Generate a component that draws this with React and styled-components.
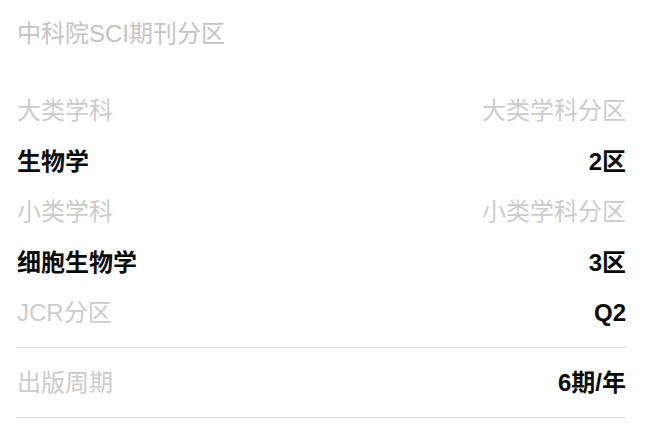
import React from "react";
import styled, { createGlobalStyle } from "styled-components";

const Global = createGlobalStyle`
  html, body { margin: 0; padding: 0; background: #ffffff; }
  body { font-family: "Liberation Sans", "Noto Sans CJK SC", sans-serif; }
`;

const Panel = styled.div`
  width: 649px;
  box-sizing: border-box;
  padding: 0 23px 0 16px;
  background: #fff;
`;

const Title = styled.h2`
  margin: 0;
  padding-left: 1px;
  height: 68px;
  line-height: 68px;
  font-size: 24px;
  font-weight: 400;
  color: #c4c4c4;
`;

const Group = styled.div`
  padding: 18px 0 8.5px;
  border-bottom: 1px solid #dcdcdc;
`;

const Row = styled.div`
  display: flex;
  justify-content: space-between;
  align-items: center;
  height: ${(p) => p.$h || 50.5}px;
  padding-left: 1px;
  font-size: 24px;
  border-bottom: ${(p) => (p.$divider ? "1px solid #dcdcdc" : "none")};
`;

const Cell = styled.span`
  color: ${(p) => (p.$strong ? "#0a0a0a" : "#cccccc")};
  font-weight: ${(p) => (p.$strong ? 700 : 400)};
  line-height: 1;
  white-space: nowrap;
`;

export default function App() {
  return (
    <>
      <Global />
      <Panel>
        <Title>中科院SCI期刊分区</Title>
        <Group>
          <Row>
            <Cell>大类学科</Cell>
            <Cell>大类学科分区</Cell>
          </Row>
          <Row>
            <Cell $strong>生物学</Cell>
            <Cell $strong>2区</Cell>
          </Row>
          <Row>
            <Cell>小类学科</Cell>
            <Cell>小类学科分区</Cell>
          </Row>
          <Row>
            <Cell $strong>细胞生物学</Cell>
            <Cell $strong>3区</Cell>
          </Row>
          <Row>
            <Cell>JCR分区</Cell>
            <Cell $strong>Q2</Cell>
          </Row>
        </Group>
        <Row $h={69} $divider>
          <Cell>出版周期</Cell>
          <Cell $strong>6期/年</Cell>
        </Row>
      </Panel>
    </>
  );
}
